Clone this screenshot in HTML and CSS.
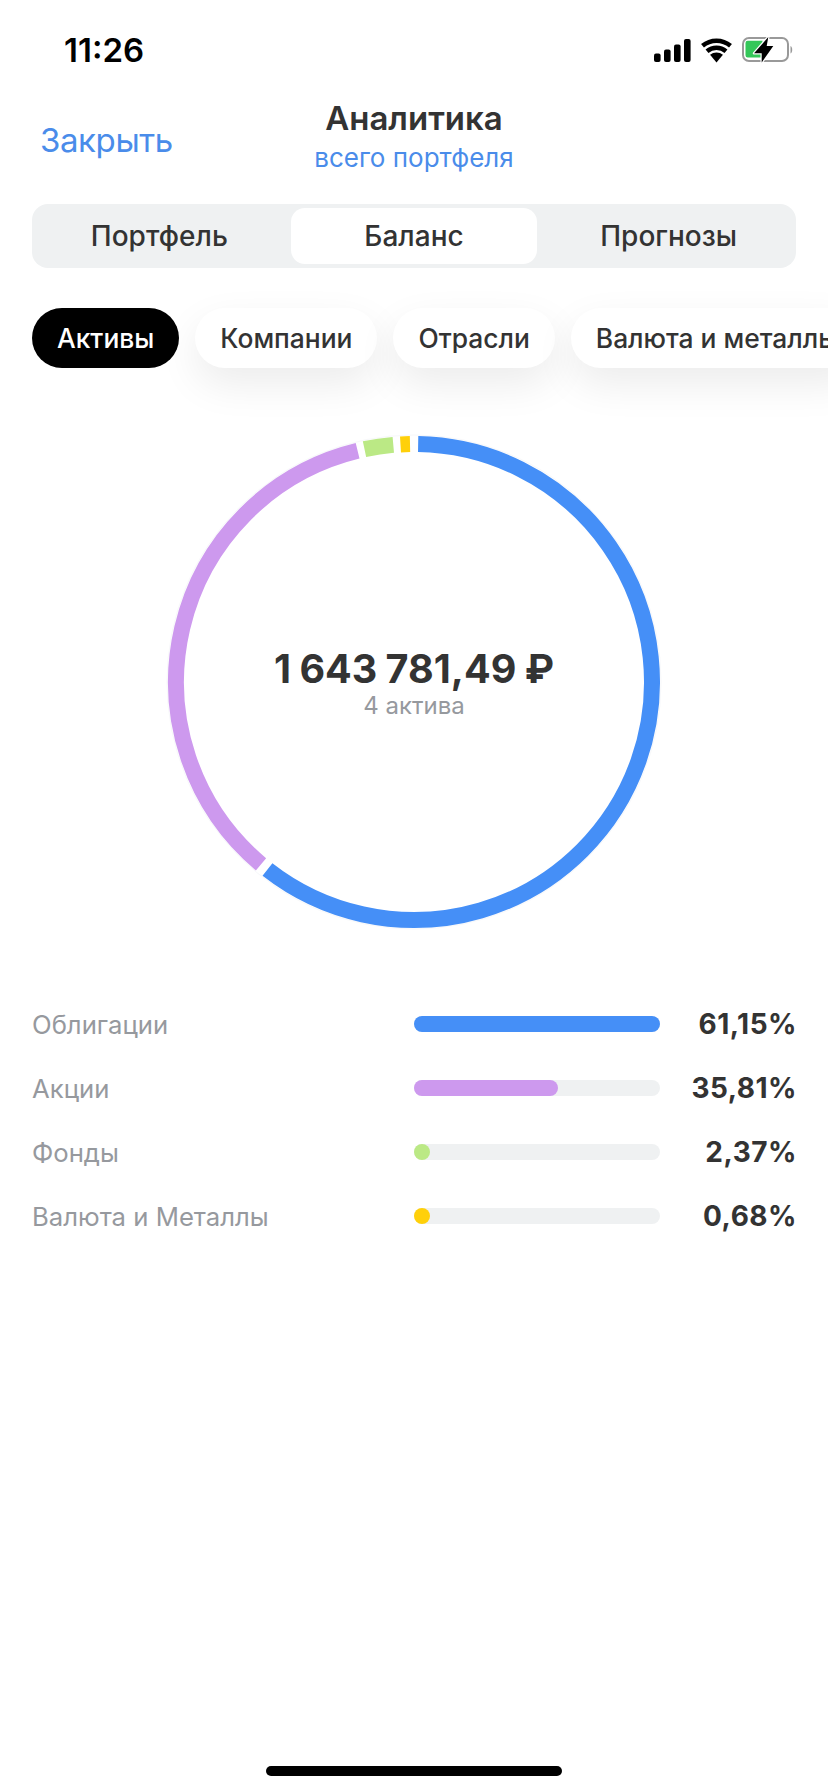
FILE: index.html
```html
<!DOCTYPE html>
<html lang="ru">
<head>
<meta charset="utf-8">
<title>Аналитика</title>
<link rel="stylesheet" href="styles.css">
</head>
<body>
<div class="screen">
  <div class="status">
    <span class="time">11:26</span>
    <div class="status-icons">
      <svg class="ico-signal" width="37" height="23" viewBox="0 0 37 23"><rect x="0" y="14.5" width="6.6" height="8.5" rx="2"/><rect x="10" y="10.5" width="6.6" height="12.5" rx="2"/><rect x="20" y="5.5" width="6.6" height="17.5" rx="2"/><rect x="30" y="0" width="6.6" height="23" rx="2"/></svg>
      <svg class="ico-wifi" width="31" height="25" viewBox="0 0 31 25"><path d="M0.07 6.1 A24 24 0 0 1 30.93 6.1 L28.03 9.56 A19.5 19.5 0 0 0 2.97 9.56Z"/><path d="M4.57 11.48 A17 17 0 0 1 26.43 11.48 L23.53 14.92 A12.5 12.5 0 0 0 7.47 14.92Z"/><path d="M9.07 16.84 A10 10 0 0 1 21.93 16.84 L15.5 24.5Z"/></svg>
      <svg class="ico-batt" width="52" height="26" viewBox="0 0 52 26"><rect x="1" y="1" width="45" height="23" rx="6" fill="none" stroke="#999" stroke-width="2"/><path d="M3.5 6 a2.2 2.2 0 0 1 2.2-2.2 H20.5 V20.4 H5.7 a2.2 2.2 0 0 1-2.2-2.2Z" fill="#34c759"/><path d="M48.5 9 C50.8 10 50.8 15.5 48.5 16.5Z" fill="#999"/><path d="M26.3 0 L12 16.3 H19.7 V25.5 L31.3 9 H24.7 Z" fill="#000" stroke="#fff" stroke-width="2.4" stroke-linejoin="round" paint-order="stroke"/></svg>
    </div>
  </div>

  <header class="nav">
    <span class="close">Закрыть</span>
    <div class="nav-title">
      <div class="title">Аналитика</div>
      <div class="subtitle">всего портфеля</div>
    </div>
  </header>

  <div class="segments">
    <div class="segment">Портфель</div>
    <div class="segment active">Баланс</div>
    <div class="segment">Прогнозы</div>
  </div>

  <div class="chips">
    <div class="chip chip-on">Активы</div>
    <div class="chip">Компании</div>
    <div class="chip">Отрасли</div>
    <div class="chip">Валюта и металлы</div>
  </div>

  <div class="donut">
    <svg class="ring" width="500" height="500" viewBox="0 0 500 500">
      <circle cx="250" cy="250" r="247" fill="none" stroke="#f7f8fa" stroke-width="1"/>
      <path class="arc" stroke="#458ff7" d="M254.15 12.04 A238 238 0 1 1 103.47 437.55"/>
      <path class="arc" stroke="#cd99ee" d="M97 432.3 A238 238 0 0 1 193.6 18.8"/>
      <path class="arc" stroke="#bbe985" d="M200.5 17.2 A238 238 0 0 1 229.3 12.9"/>
      <path class="arc" stroke="#ffd00a" d="M236.5 12.4 A238 238 0 0 1 246 12"/>
    </svg>
    <div class="donut-center">
      <div class="sum">1 643 781,49 ₽</div>
      <div class="count">4 актива</div>
    </div>
  </div>

  <div class="legend">
    <div class="row">
      <span class="label">Облигации</span>
      <div class="track"><div class="fill blue" style="width:100%"></div></div>
      <span class="pct">61,15%</span>
    </div>
    <div class="row">
      <span class="label">Акции</span>
      <div class="track"><div class="fill purple" style="width:58.6%"></div></div>
      <span class="pct">35,81%</span>
    </div>
    <div class="row">
      <span class="label">Фонды</span>
      <div class="track"><div class="fill green" style="width:16px"></div></div>
      <span class="pct">2,37%</span>
    </div>
    <div class="row">
      <span class="label">Валюта и Металлы</span>
      <div class="track"><div class="fill yellow" style="width:16px"></div></div>
      <span class="pct">0,68%</span>
    </div>
  </div>

  <div class="home"></div>
</div>
</body>
</html>
```
FILE: styles.css
```css
* { box-sizing: border-box; }
html, body { margin: 0; padding: 0; background: #fff; }
body { font-family: Inter, "Noto Sans", sans-serif; color: #333; }
.screen { position: relative; width: 828px; height: 1792px; overflow: hidden; background: #fff; }

.status { display: flex; justify-content: space-between; align-items: center; height: 50px; margin-top: 25px; padding: 0 34px 0 64px; }
.time { font-size: 33px; font-weight: 600; color: #000; }
.status-icons { display: flex; align-items: center; gap: 10px; }
.ico-signal, .ico-wifi { fill: #000; }

.nav { position: relative; height: 88px; margin-top: 20px; display: flex; justify-content: center; }
.close { position: absolute; left: 40px; top: 25px; font-size: 33px; line-height: 40px; color: #4a8cea; letter-spacing: -0.4px; }
.nav-title { text-align: center; padding-top: 3px; }
.title { font-size: 33px; line-height: 40px; font-weight: 600; color: #333; }
.subtitle { font-size: 26px; line-height: 32px; margin-top: 4px; color: #4a8cea; }

.segments { display: grid; grid-template-columns: repeat(3, 1fr); align-items: center; height: 64px; margin: 21px 32px 0 32px; padding: 4px 0; background: #eff1f2; border-radius: 16px; }
.segment { text-align: center; font-size: 28px; font-weight: 500; line-height: 56px; color: #333; }
.segment.active { background: #fff; border-radius: 14px; margin: 0 4px; }

.chips { display: flex; gap: 16px; margin: 40px 0 0 32px; width: 900px; }
.chip { flex: none; height: 60px; line-height: 60px; padding: 0 25px; border-radius: 30px; background: #fff; font-size: 26.4px; font-weight: 500; color: #333; box-shadow: 0 16px 40px rgba(0, 0, 0, 0.08); white-space: nowrap; }
.chip-on { background: #000; color: #fff; font-weight: 500; box-shadow: none; }

.donut { position: relative; width: 500px; height: 500px; margin: 64px auto 0; }
.ring { display: block; }
.arc { fill: none; stroke-width: 16; }
.donut-center { position: absolute; left: 0; right: 0; top: 215px; text-align: center; }
.sum { font-size: 39.5px; line-height: 44px; font-weight: 700; color: #333; word-spacing: -1px; }
.count { font-size: 24px; line-height: 28px; color: #96999e; margin-top: 1px; }

.legend { margin: 68px 31px 0 32px; display: flex; flex-direction: column; gap: 16px; }
.row { display: flex; align-items: center; height: 48px; }
.label { width: 382px; font-size: 25.7px; color: #96999e; white-space: nowrap; }
.track { width: 246px; height: 16px; border-radius: 8px; background: #eff1f2; }
.fill { height: 16px; border-radius: 8px; }
.blue { background: #458ff7; }
.purple { background: #cd99ee; }
.green { background: #bbe985; }
.yellow { background: #ffd00a; }
.pct { flex: 1; text-align: right; font-size: 28px; font-weight: 700; color: #333; letter-spacing: 0.5px; }

.home { position: absolute; left: 266px; bottom: 16px; width: 296px; height: 10px; border-radius: 5px; background: #000; }
```
